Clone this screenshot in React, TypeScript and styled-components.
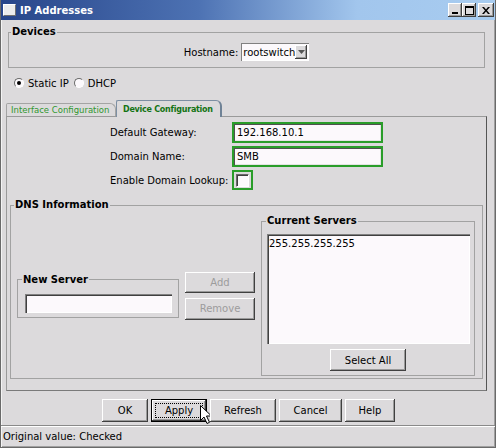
import React from 'react';
import styled, { createGlobalStyle } from 'styled-components';

const FACE = '#dcdadc';
const FIELD = '#fcf9fc';
const GREEN = '#2a9d2a';
const FONT = '"DejaVu Sans", Verdana, sans-serif';

const GlobalStyle = createGlobalStyle`
  html, body {
    margin: 0;
    padding: 0;
    background: ${FACE};
  }
  body {
    font-family: ${FONT};
    font-size: 10px;
    color: #000;
  }
`;

const Window = styled.div`
  width: 496px;
  height: 448px;
  box-sizing: border-box;
  display: flex;
  flex-direction: column;
  background: ${FACE};
  border: 1px solid #6a6a6a;
  border-top: none;
  box-shadow: inset 1px 0 #f4f4f4, inset -1px -1px #a0a0a0;
  overflow: hidden;
`;

const TitleBar = styled.div`
  height: 20px;
  margin: 0 -1px;
  padding: 0 2px 0 3px;
  display: flex;
  align-items: center;
  background: linear-gradient(90deg, #27458a 0%, #4d72b3 40%, #a2c6ed 72%, #a8ccf0 100%);
`;

const TitleIcon = styled.div`
  width: 11px;
  height: 10px;
  background: #ececec;
  border: 1px solid;
  border-color: #fff #707070 #707070 #fff;
`;

const Title = styled.div`
  margin-left: 4px;
  flex: 1;
  color: #fff;
  font-weight: bold;
  font-size: 10px;
`;

const Caption = styled.div`
  display: flex;
`;

const CaptionButton = styled.div<{ $gap?: number }>`
  width: ${(p) => (p.$gap ? 16 : 14)}px;
  height: 14px;
  margin-left: ${(p) => p.$gap ?? 0}px;
  box-sizing: border-box;
  background: ${FACE};
  box-shadow: inset -1px -1px #404040, inset 1px 1px #fff, inset -2px -2px #9a9a9a;
  display: flex;
  align-items: center;
  justify-content: center;
  svg {
    display: block;
  }
`;

const Body = styled.div`
  padding: 6px 8px 0 5px;
  display: flex;
  flex-direction: column;
`;

const Group = styled.fieldset<{ $pad: string; $mx?: string }>`
  margin: 0 ${(p) => p.$mx ?? '0'};
  min-width: 0;
  border: 1px solid #a2a2a2;
  padding: ${(p) => p.$pad};
`;

// $ml: shift so the caption sits a few px from the left border whatever the padding
const Legend = styled.legend<{ $ml?: number }>`
  font-weight: bold;
  font-size: 10px;
  line-height: 12px;
  padding: 0 1px;
  margin-left: ${(p) => p.$ml ?? 3}px;
`;

const HostRow = styled.div`
  display: flex;
  justify-content: center;
  align-items: center;
  gap: 3px;
`;

const Select = styled.div`
  width: 68px;
  height: 18px;
  box-sizing: border-box;
  background: ${FIELD};
  box-shadow: inset 1px 1px #808080, inset -1px -1px #fff;
  display: flex;
  align-items: center;
  padding: 0 2px;
  span {
    flex: 1;
  }
`;

const SelectArrow = styled.div`
  width: 15px;
  height: 14px;
  background: ${FACE};
  box-shadow: inset -1px -1px #404040, inset 1px 1px #fff, inset -2px -2px #9a9a9a;
  display: flex;
  align-items: center;
  justify-content: center;
`;

const RadioRow = styled.div`
  margin: 9px 0 0 8px;
  height: 12px;
  display: flex;
  align-items: center;
`;

const RadioItem = styled.label`
  display: flex;
  align-items: center;
  gap: 4px;
  margin-right: 5px;
`;

const RadioCircle = styled.span<{ $on?: boolean }>`
  width: 10px;
  height: 10px;
  box-sizing: border-box;
  border-radius: 50%;
  border: 1px solid;
  border-color: #6a6a6a #fff #fff #6a6a6a;
  background: ${FIELD};
  display: flex;
  align-items: center;
  justify-content: center;
  &::after {
    content: '';
    width: 4px;
    height: 4px;
    border-radius: 50%;
    background: ${(p) => (p.$on ? '#000' : 'transparent')};
  }
`;

const TabStrip = styled.div`
  margin-top: 10px;
  height: 17px;
  display: flex;
  align-items: flex-end;
  position: relative;
  z-index: 1;
`;

const Tab = styled.div<{ $active?: boolean; $w: number }>`
  width: ${(p) => p.$w}px;
  height: ${(p) => (p.$active ? 17 : 13)}px;
  box-sizing: border-box;
  padding-left: ${(p) => (p.$active ? 6 : 4)}px;
  display: flex;
  align-items: center;
  background: ${FACE};
  border: 1px solid ${(p) => (p.$active ? '#7d8fa3' : '#a4a4a4')};
  border-right: ${(p) => (p.$active ? '2px solid #6f8296' : '1px solid #a4a4a4')};
  border-bottom: none;
  border-radius: 2px 6px 0 0;
  margin-bottom: ${(p) => (p.$active ? -1 : 0)}px;
  color: ${(p) => (p.$active ? '#137313' : '#2f972f')};
  font-weight: ${(p) => (p.$active ? 'bold' : 'normal')};
  font-size: ${(p) => (p.$active ? 8 : 8.5)}px;
  letter-spacing: ${(p) => (p.$active ? -0.25 : 0)}px;
  white-space: nowrap;
`;

const Panel = styled.div`
  border: 1px solid #9a9a9a;
  border-right-color: #555;
  border-bottom-color: #7a7a7a;
  padding: 5px 3px 8px 3px;
`;

const FormGrid = styled.div`
  display: grid;
  grid-template-columns: 122px auto;
  row-gap: 3px;
  align-items: center;
  padding-left: 100px;
  margin-bottom: 9px;
`;

const GreenFrame = styled.div<{ $w: number; $h: number }>`
  width: ${(p) => p.$w}px;
  height: ${(p) => p.$h}px;
  box-sizing: border-box;
  border: 2px solid ${GREEN};
  display: flex;
  align-items: center;
`;

const Field = styled.div`
  flex: 1;
  align-self: stretch;
  background: ${FIELD};
  box-shadow: inset 1px 1px #505050, inset -1px -1px #e4e4e4;
  display: flex;
  align-items: center;
  padding-left: 3px;
`;

const CheckBox = styled.div`
  width: 13px;
  height: 13px;
  box-sizing: border-box;
  margin-left: 2px;
  background: ${FIELD};
  border: 1px solid;
  border-color: #6a6a6a #fff #fff #6a6a6a;
  box-shadow: inset 1px 1px #404040;
`;

const DnsRow = styled.div`
  display: flex;
  align-items: center;
  gap: 6px;
`;

const LeftCol = styled.div`
  display: flex;
  align-items: center;
  gap: 6px;
`;

const ButtonCol = styled.div`
  display: flex;
  flex-direction: column;
  gap: 5px;
`;

const TextInput = styled.div<{ $w: number }>`
  width: ${(p) => p.$w}px;
  height: 19px;
  box-sizing: border-box;
  background: ${FIELD};
  box-shadow: inset 1px 1px #808080, inset 2px 2px #404040, inset -1px -1px #fff;
`;

const ListBox = styled.div`
  width: 203px;
  height: 110px;
  box-sizing: border-box;
  background: ${FIELD};
  box-shadow: inset 1px 1px #808080, inset 2px 2px #404040, inset -1px -1px #fff;
  padding: 4px 0 0 2px;
`;

const CenterRow = styled.div`
  display: flex;
  justify-content: center;
  margin-top: 5px;
`;

const Button = styled.button<{ $w?: number; $h?: number; $focus?: boolean }>`
  font-family: ${FONT};
  font-size: 10px;
  color: ${(p) => (p.disabled ? '#9c9c9c' : '#000')};
  height: ${(p) => p.$h ?? 22}px;
  min-width: ${(p) => p.$w ?? 0}px;
  padding: 0 12px;
  border: none;
  background: ${FACE};
  position: relative;
  box-shadow: ${(p) =>
    p.$focus
      ? 'inset 0 0 0 1px #000, inset -2px -2px #404040, inset 2px 2px #fff, inset -3px -3px #9a9a9a'
      : 'inset -1px -1px #404040, inset 1px 1px #fff, inset -2px -2px #9a9a9a'};
  outline: ${(p) => (p.$focus ? '1px dotted #000' : 'none')};
  outline-offset: -5px;
`;

const ActionRow = styled.div`
  margin-top: 8px;
  height: 23px;
  display: flex;
  justify-content: center;
  gap: 3px;
  padding-left: 4px;
`;

const Cursor = styled.svg`
  position: absolute;
  left: 49px;
  top: 6px;
`;

const StatusBar = styled.div`
  margin-top: 3px;
  flex: 1;
  border-top: 1px solid #8a8a8a;
  box-shadow: inset 0 1px #fff;
  padding: 0 0 0 2px;
  display: flex;
  align-items: center;
`;

const Minimize = () => (
  <svg width="8" height="8" viewBox="0 0 8 8">
    <rect x="1" y="6" width="6" height="2" fill="#000" />
  </svg>
);

const Maximize = () => (
  <svg width="9" height="9" viewBox="0 0 9 9">
    <rect x="0.5" y="0.5" width="8" height="8" fill="none" stroke="#000" />
    <rect x="0" y="0" width="9" height="2" fill="#000" />
  </svg>
);

const Close = () => (
  <svg width="8" height="7" viewBox="0 0 8 7">
    <path d="M0 0h2l2 2.5L6 0h2L5 3.5 8 7H6L4 4.5 2 7H0l3-3.5z" fill="#000" />
  </svg>
);

const DownArrow = () => (
  <svg width="7" height="4" viewBox="0 0 7 4">
    <path d="M0 0h7L3.5 4z" fill="#555" />
  </svg>
);

export default function App() {
  return (
    <>
      <GlobalStyle />
      <Window>
        <TitleBar>
          <TitleIcon />
          <Title>IP Addresses</Title>
          <Caption>
            <CaptionButton>
              <Minimize />
            </CaptionButton>
            <CaptionButton>
              <Maximize />
            </CaptionButton>
            <CaptionButton $gap={2}>
              <Close />
            </CaptionButton>
          </Caption>
        </TitleBar>
        <Body>
          <Group $pad="5px 0 6px" $mx="0 0 0 1px">
            <Legend $ml={2}>Devices</Legend>
            <HostRow>
              <span>Hostname:</span>
              <Select>
                <span>rootswitch</span>
                <SelectArrow>
                  <DownArrow />
                </SelectArrow>
              </Select>
            </HostRow>
          </Group>

          <RadioRow>
            <RadioItem>
              <RadioCircle $on />
              Static IP
            </RadioItem>
            <RadioItem>
              <RadioCircle />
              DHCP
            </RadioItem>
          </RadioRow>

          <TabStrip>
            <Tab $w={110}>Interface Configuration</Tab>
            <Tab $w={106} $active>
              Device Configuration
            </Tab>
          </TabStrip>
          <Panel>
            <FormGrid>
              <span>Default Gateway:</span>
              <GreenFrame $w={151} $h={21}>
                <Field>192.168.10.1</Field>
              </GreenFrame>
              <span>Domain Name:</span>
              <GreenFrame $w={151} $h={21}>
                <Field>SMB</Field>
              </GreenFrame>
              <span>Enable Domain Lookup:</span>
              <GreenFrame $w={21} $h={20}>
                <CheckBox />
              </GreenFrame>
            </FormGrid>

            <Group $pad="4px 7px 2px 6px" $mx="0 3px">
              <Legend $ml={-3}>DNS Information</Legend>
              <DnsRow>
                <LeftCol>
                  <Group $pad="8px 6px 4px 7px">
                    <Legend $ml={-3}>New Server</Legend>
                    <TextInput $w={147} />
                  </Group>
                  <ButtonCol>
                    <Button disabled $w={70} $h={21}>
                      Add
                    </Button>
                    <Button disabled $w={70} $h={22}>
                      Remove
                    </Button>
                  </ButtonCol>
                </LeftCol>
                <Group $pad="7px 5px 4px 5px">
                  <Legend $ml={-1}>Current Servers</Legend>
                  <ListBox>255.255.255.255</ListBox>
                  <CenterRow>
                    <Button $w={76}>Select All</Button>
                  </CenterRow>
                </Group>
              </DnsRow>
            </Group>
          </Panel>

          <ActionRow>
            <Button $w={46} $h={23}>
              OK
            </Button>
            <Button $w={56} $h={23} $focus>
              Apply
              <Cursor width="13" height="20" viewBox="0 0 13 20">
                <path
                  d="M0.5 0.5v15l3.5-3.5 3 6.5 2.5-1.2-3-6.3h5z"
                  fill="#fff"
                  stroke="#000"
                  strokeWidth="1"
                />
              </Cursor>
            </Button>
            <Button $w={66} $h={23}>
              Refresh
            </Button>
            <Button $w={63} $h={23}>
              Cancel
            </Button>
            <Button $w={50} $h={23}>
              Help
            </Button>
          </ActionRow>
        </Body>
        <StatusBar>Original value: Checked</StatusBar>
      </Window>
    </>
  );
}
